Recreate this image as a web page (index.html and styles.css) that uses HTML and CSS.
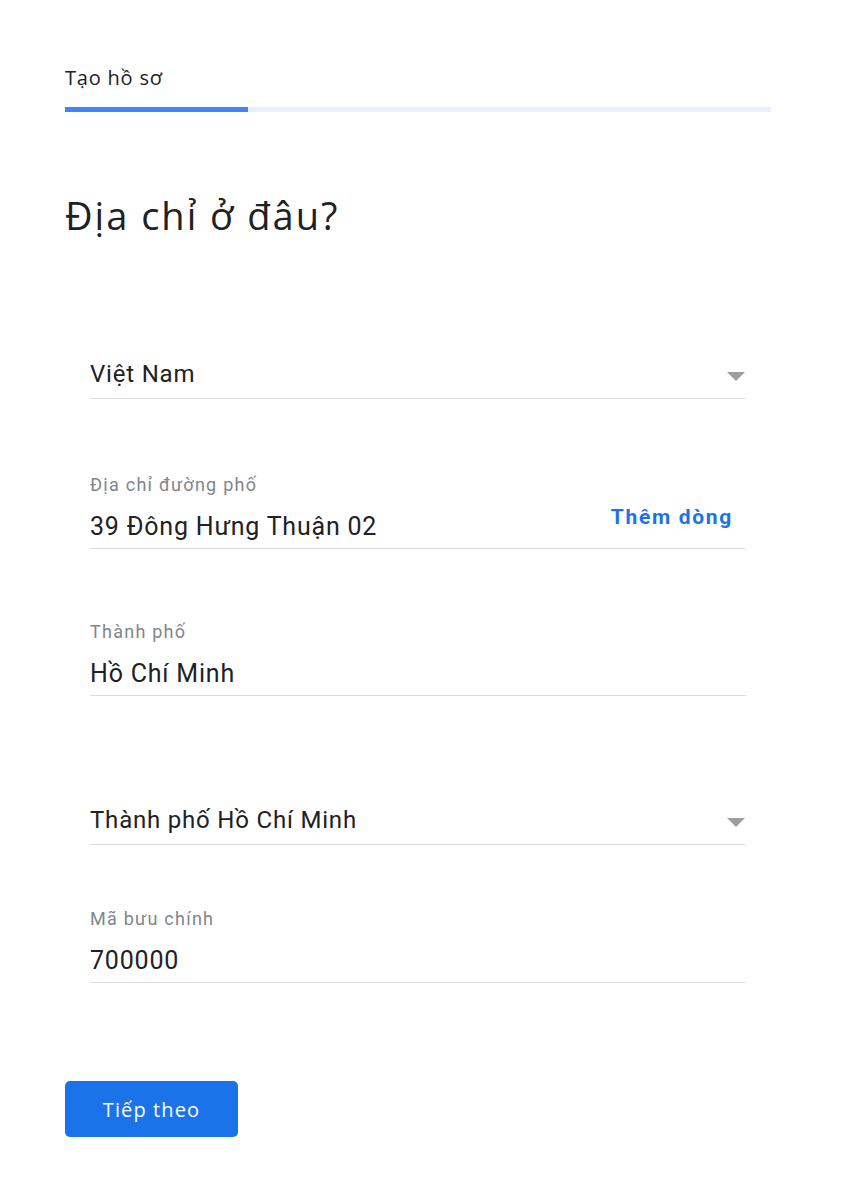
FILE: index.html
```html
<!DOCTYPE html>
<html lang="vi">
<head>
    <meta charset="UTF-8">
    <meta name="viewport" content="width=device-width, initial-scale=1.0">
    <title>Tạo hồ sơ</title>
    <link rel="stylesheet" href="styles.css">
</head>
<body>
    <div class="page">
        <div class="step-title">Tạo hồ sơ</div>
        <div class="progress"><div class="progress-fill"></div></div>

        <h1>Địa chỉ ở đâu?</h1>

        <form class="address-form">
            <!-- Country -->
            <div class="select-field first">
                <span class="value">Việt Nam</span>
                <span class="caret"></span>
            </div>

            <div class="field street">
                <div class="label">Địa chỉ đường phố</div>
                <div class="value-row">
                    <span class="value">39 Đông Hưng Thuận 02</span>
                    <a class="add-line" href="#">Thêm dòng</a>
                </div>
            </div>

            <div class="field city">
                <div class="label">Thành phố</div>
                <div class="value-row">
                    <span class="value">Hồ Chí Minh</span>
                </div>
            </div>

            <!-- Province -->
            <div class="select-field province">
                <span class="value">Thành phố Hồ Chí Minh</span>
                <span class="caret"></span>
            </div>

            <div class="field postal">
                <div class="label">Mã bưu chính</div>
                <div class="value-row">
                    <span class="value">700000</span>
                </div>
            </div>
        </form>

        <button class="next-btn" type="button">Tiếp theo</button>
    </div>
</body>
</html>
```

FILE: styles.css
```css
body {
    margin: 0;
    padding: 0;
    background: #fff;
    font-family: "Open Sans", Arial, sans-serif;
    color: #202124;
}
.page {
    width: 706px;
    padding: 66px 0 60px 65px;
}
.step-title {
    font-size: 20px;
    line-height: 24px;
    letter-spacing: 0.8px;
    color: #202124;
}
.progress {
    margin-top: 17px;
    height: 5px;
    background-color: #e8f0fe;
}
.progress-fill {
    width: 183px;
    height: 100%;
    background-color: #4285f4;
}
h1 {
    margin: 80px 0 0 0;
    font-size: 38px;
    line-height: 46px;
    font-weight: 400;
    letter-spacing: 2px;
    color: #202124;
}
.address-form {
    margin-top: 122px;
    padding: 0 25px;
    font-family: Roboto, "Liberation Sans", Arial, sans-serif;
}
.value {
    font-size: 25px;
    line-height: 28px;
    letter-spacing: 0.8px;
    color: #202124;
}
.select-field .value {
    font-size: 24px;
}
.select-field {
    display: flex;
    justify-content: space-between;
    align-items: center;
    padding-bottom: 10px;
    border-bottom: 1px solid #dadce0;
}
.caret {
    width: 0;
    height: 0;
    margin: 4px 1px 0 0;
    border-left: 9px solid transparent;
    border-right: 9px solid transparent;
    border-top: 9px solid #9e9e9e;
}
.field {
    border-bottom: 1px solid #dadce0;
}
.label {
    font-size: 18px;
    line-height: 24px;
    letter-spacing: 1.25px;
    color: #80868b;
}
.value-row {
    display: flex;
    justify-content: space-between;
    align-items: flex-start;
    margin-top: 16px;
    padding-bottom: 7px;
}
.add-line {
    margin: -6px 13px 0 0;
    font-size: 21px;
    line-height: 20px;
    font-weight: 700;
    letter-spacing: 1.7px;
    color: #1a73e8;
    text-decoration: none;
}
.street {
    margin-top: 74px;
}
.city {
    margin-top: 71px;
}
.province {
    margin-top: 110px;
}
.postal {
    margin-top: 62px;
}
.next-btn {
    margin-top: 98px;
    width: 173px;
    height: 56px;
    border: none;
    border-radius: 5px;
    background-color: #1a73e8;
    color: #fff;
    font-family: "Open Sans", Arial, sans-serif;
    font-size: 20px;
    font-weight: 500;
    letter-spacing: 1.1px;
    cursor: pointer;
}
```
